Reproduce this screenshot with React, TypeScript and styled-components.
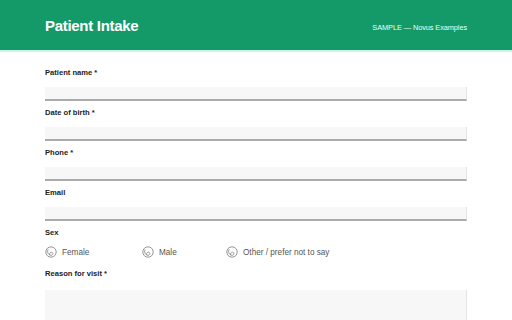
import styled, { createGlobalStyle } from 'styled-components';

const Global = createGlobalStyle`
  body {
    margin: 0;
    background: #fff;
    font-family: "Liberation Sans", Arial, sans-serif;
  }
`;

const Header = styled.header`
  height: 50px;
  background: #149a68;
  border-bottom: 2px solid #c6f7e6;
  display: flex;
  align-items: center;
  justify-content: space-between;
  padding: 0 45px;
`;
const Title = styled.h1`
  margin: 0;
  font-size: 15px;
  letter-spacing: -0.3px;
  font-weight: bold;
  color: #fff;
`;
const Tag = styled.span`
  margin-top: 4px;
  font-size: 7.4px;
  letter-spacing: -0.1px;
  color: #eafff6;
`;
const Form = styled.form`
  padding: 16px 45px 0 45px;
`;
const Field = styled.div`
  margin-bottom: 7px;
`;
const Label = styled.div<{ $gap?: number }>`
  font-size: 7.6px;
  line-height: 10px;
  font-weight: bold;
  color: #222;
  margin-bottom: ${(p) => p.$gap ?? 9}px;
`;
const Input = styled.div<{ $tall?: boolean }>`
  height: ${(p) => (p.$tall ? 60 : 12)}px;
  background: #f7f7f7;
  border-bottom: ${(p) => (p.$tall ? 'none' : '2px solid #aaaaaa')};
  border-right: 1px solid #e4e4e4;
`;
const RadioRow = styled.div`
  display: flex;
  align-items: center;
  height: 14px;
  margin-bottom: 10px;
`;
const Option = styled.label<{ $w: number }>`
  display: flex;
  align-items: center;
  gap: 5px;
  width: ${(p) => p.$w}px;
  font-size: 8.2px;
  color: #555;
`;

const RadioIcon = () => (
  <svg width="12" height="12" viewBox="0 0 12 12">
    <circle cx="6" cy="6" r="5.2" fill="none" stroke="#8a8a8a" strokeWidth="0.9" />
    <path d="M3.2 3.4 C2 5 2.6 9 6 9.3 C8.2 9.4 8.6 6.6 6.6 6.2 C5 6 4.2 7.5 4.6 8.8" fill="none" stroke="#8a8a8a" strokeWidth="0.9" />
  </svg>
);

const fields = ['Patient name *', 'Date of birth *', 'Phone *', 'Email'];
const options = [
  { label: 'Female', w: 97 },
  { label: 'Male', w: 84 },
  { label: 'Other / prefer not to say', w: 140 },
];

export default function App() {
  return (
    <>
      <Global />
      <Header>
        <Title>Patient Intake</Title>
        <Tag>SAMPLE — Novus Examples</Tag>
      </Header>
      <Form>
        {fields.map((f) => (
          <Field key={f}>
            <Label>{f}</Label>
            <Input />
          </Field>
        ))}
        <Label $gap={7}>Sex</Label>
        <RadioRow>
          {options.map((o) => (
            <Option key={o.label} $w={o.w}>
              <RadioIcon />
              {o.label}
            </Option>
          ))}
        </RadioRow>
        <Label $gap={11}>Reason for visit *</Label>
        <Input $tall />
      </Form>
    </>
  );
}
